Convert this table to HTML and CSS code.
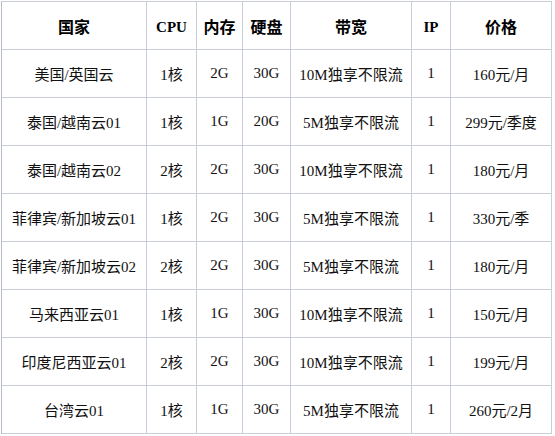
FILE: index.html
```html
<!DOCTYPE html>
<html lang="zh">
<head>
<meta charset="utf-8">
<link rel="stylesheet" href="styles.css">
</head>
<body>
<div class="grid">
  <div class="cell head">国家</div><div class="cell head latin">CPU</div><div class="cell head">内存</div><div class="cell head">硬盘</div><div class="cell head">带宽</div><div class="cell head latin">IP</div><div class="cell head">价格</div>

  <div class="cell">美国/英国云</div><div class="cell">1核</div><div class="cell">2G</div><div class="cell">30G</div><div class="cell">10M独享不限流</div><div class="cell">1</div><div class="cell">160元/月</div>

  <div class="cell">泰国/越南云01</div><div class="cell">1核</div><div class="cell">1G</div><div class="cell">20G</div><div class="cell">5M独享不限流</div><div class="cell">1</div><div class="cell">299元/季度</div>

  <div class="cell">泰国/越南云02</div><div class="cell">2核</div><div class="cell">2G</div><div class="cell">30G</div><div class="cell">10M独享不限流</div><div class="cell">1</div><div class="cell">180元/月</div>

  <div class="cell">菲律宾/新加坡云01</div><div class="cell">1核</div><div class="cell">2G</div><div class="cell">30G</div><div class="cell">5M独享不限流</div><div class="cell">1</div><div class="cell">330元/季</div>

  <div class="cell">菲律宾/新加坡云02</div><div class="cell">2核</div><div class="cell">2G</div><div class="cell">30G</div><div class="cell">5M独享不限流</div><div class="cell">1</div><div class="cell">180元/月</div>

  <div class="cell">马来西亚云01</div><div class="cell">1核</div><div class="cell">1G</div><div class="cell">30G</div><div class="cell">10M独享不限流</div><div class="cell">1</div><div class="cell">150元/月</div>

  <div class="cell">印度尼西亚云01</div><div class="cell">2核</div><div class="cell">2G</div><div class="cell">30G</div><div class="cell">10M独享不限流</div><div class="cell">1</div><div class="cell">199元/月</div>

  <div class="cell">台湾云01</div><div class="cell">1核</div><div class="cell">1G</div><div class="cell">30G</div><div class="cell">5M独享不限流</div><div class="cell">1</div><div class="cell">260元/2月</div>
</div>
</body>
</html>
```

FILE: styles.css
```css
html, body {
  margin: 0;
  padding: 0;
  background: #ffffff;
}

.grid {
  display: grid;
  grid-template-columns: 145px 50px 46px 48px 121px 39px 101px;
  grid-auto-rows: 48px;
  width: max-content;
  margin: 1px 0 0 1px;
  border-top: 1px solid #c9cdd9;
  border-left: 1px solid #b6bacb;
}

.cell {
  box-sizing: border-box;
  border-right: 1px solid #c9cdd9;
  border-bottom: 1px solid #c9cdd9;
  display: flex;
  align-items: center;
  justify-content: center;
  white-space: nowrap;
  font-family: "Liberation Serif", "Noto Sans CJK SC", serif;
  font-size: 15px;
  color: #111111;
}

.head {
  font-family: "Noto Sans CJK SC", sans-serif;
  font-size: 16px;
  font-weight: bold;
  color: #000000;
}

.head.latin {
  font-family: "Liberation Serif", serif;
  font-size: 15px;
  padding-top: 3px;
}
```
